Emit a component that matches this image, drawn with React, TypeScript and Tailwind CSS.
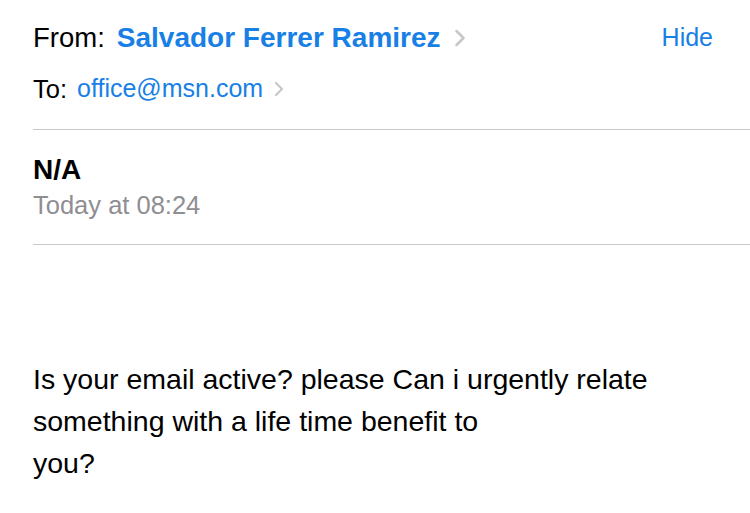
import { ChevronRight } from "lucide-react";

export default function App() {
  return (
    <div className="w-[750px] h-[513px] bg-white overflow-hidden font-['Liberation_Sans',Arial,sans-serif] text-black">
      {/* header */}
      <div className="ml-[33px] border-b border-[#c8c7cc] pt-[22px] pb-[24px]">
        <div className="flex items-center justify-between pr-[37px] h-[32px]">
          <div className="flex items-center">
            <span className="text-[27.5px]">From:</span>
            <span className="ml-[12px] text-[28px] font-bold text-[#187fe6]">Salvador Ferrer Ramirez</span>
            <ChevronRight className="ml-[5px] text-[#c7c7cc]" size={28} strokeWidth={2.2} />
          </div>
          <span className="text-[25px] text-[#187fe6]">Hide</span>
        </div>
        <div className="flex items-center h-[32px] mt-[19px]">
          <span className="text-[25.5px]">To:</span>
          <span className="ml-[10px] text-[25px] text-[#187fe6]">office@msn.com</span>
          <ChevronRight className="ml-[4px] text-[#c7c7cc]" size={24} strokeWidth={2.2} />
        </div>
      </div>

      {/* subject */}
      <div className="ml-[33px] border-b border-[#c8c7cc] pt-[25px] pb-[24px]">
        <div className="text-[28px] font-bold leading-[30px]">N/A</div>
        <div className="text-[25.5px] leading-[30px] mt-[5px] text-[#8e8e93]">Today at 08:24</div>
      </div>

      {/* body */}
      <div className="ml-[33px] mt-[113px] text-[28.5px] leading-[42px] w-[700px]">
        <p>Is your email active? please Can i urgently relate</p>
        <p>something with a life time benefit to</p>
        <p>you?</p>
      </div>
    </div>
  );
}
